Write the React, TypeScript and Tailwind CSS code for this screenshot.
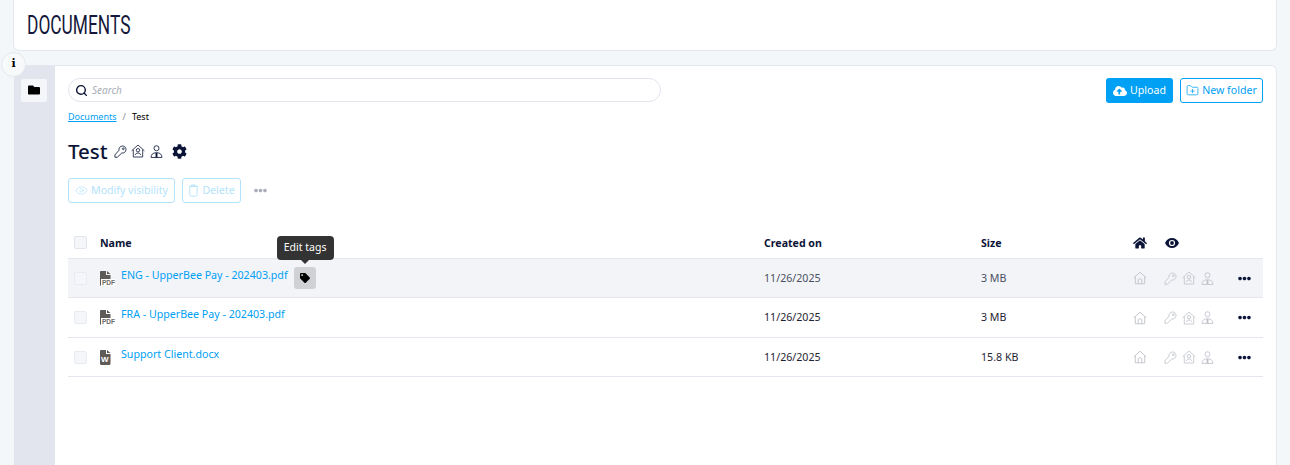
import React from "react";
import { Eye, FolderPlus, Search } from "lucide-react";
import { FaCloudUploadAlt, FaCog, FaEllipsisH, FaFolder, FaHome, FaTag } from "react-icons/fa";

const SANS = "font-['Noto_Sans',sans-serif]";

function KeyOutline({ className = "" }: { className?: string }) {
  return (
    <svg viewBox="0 0 14 14" fill="none" stroke="currentColor" strokeWidth="0.9" className={className}>
      <path d="M5.4 5.6a3.8 3.8 0 1 1 3 3L3.6 13.2H1v-2.5z" strokeLinejoin="round" />
      <circle cx="10" cy="4.1" r="0.9" />
    </svg>
  );
}

function HomeOutline({ className = "" }: { className?: string }) {
  return (
    <svg viewBox="0 0 14 14" fill="none" stroke="currentColor" strokeWidth="0.9" className={className}>
      <path d="M.8 6.8 7 1.2l6.2 5.6" />
      <path d="M2.3 5.6v7.2h9.4V5.6" />
      <path d="M5.2 12.8V8.9c0-.6.4-1 1-1h1.6c.6 0 1 .4 1 1v3.9" />
    </svg>
  );
}

function HomeUser({ className = "" }: { className?: string }) {
  return (
    <svg viewBox="0 0 14 14" fill="none" stroke="currentColor" strokeWidth="0.8" className={className}>
      <path d="M.6 6.8 7 1l6.4 5.800" />
      <path d="M2.300 5.600v7.400h9.400V5.600" />
      <circle cx="7" cy="6.200" r="1.700" />
      <path d="M4.300 11c.3-1.400 1.300-2 2.700-2s2.400.6 2.700 2" />
    </svg>
  );
}

function People({ className = "" }: { className?: string }) {
  return (
    <svg viewBox="0 0 14 14" fill="none" stroke="currentColor" strokeWidth="0.9" className={className}>
      <circle cx="7" cy="3.500" r="2.700" />
      <path d="M1.200 13.400c0-3.200 1.800-5.100 5.800-5.100s5.800 1.900 5.800 5.100z" />
      <path d="M7 8.400v5" strokeWidth="2" />
    </svg>
  );
}

function TrashOutline({ className = "" }: { className?: string }) {
  return (
    <svg viewBox="0 0 12 14" fill="none" stroke="currentColor" strokeWidth="1" className={className}>
      <path d="M1 2.400h10" />
      <path d="M4 2.200V1h4v1.200" />
      <rect x="2" y="2.400" width="8" height="10.800" rx="1.600" />
    </svg>
  );
}

function EyeDisc({ className = "" }: { className?: string }) {
  return (
    <svg viewBox="0 0 14 12" className={className}>
      <path d="M0 6c1.600-3.400 4-5 7-5s5.400 1.600 7 5c-1.600 3.400-4 5-7 5S1.600 9.400 0 6z" fill="#0b1437" />
      <circle cx="7" cy="6" r="3.100" fill="white" />
      <circle cx="7" cy="6" r="1.900" fill="#0b1437" />
    </svg>
  );
}

function FileBadge({ label }: { label: "PDF" | "W" }) {
  const pdf = label === "PDF";
  return (
    <div className="relative h-[15px] w-[14px]">
      <svg viewBox="0 0 11 15" className="h-[15px] w-[11px]" fill="#5f5b59">
        <path d="M0 1.200C0 .5.500 0 1.200 0H6v4h4.500v9.800c0 .7-.5 1.200-1.200 1.200H1.200C.5 15 0 14.500 0 13.800z" />
        <path d="M7 0l3.500 3H7z" />
      </svg>
      {pdf ? (
        <span className="absolute bottom-0 right-[-1px] bg-white pl-[1px] font-['Liberation_Sans',sans-serif] text-[6.5px] font-bold leading-[7px] text-[#6b6866]">
          PDF
        </span>
      ) : (
        <span className="absolute bottom-[1px] left-[1px] font-['Liberation_Sans',sans-serif] text-[8px] font-bold leading-[8px] text-white">
          W
        </span>
      )}
    </div>
  );
}

const ROWS = [
  { name: "ENG - UpperBee Pay - 202403.pdf", type: "PDF" as const, size: "3 MB", hover: true, h: "h-[39px]" },
  { name: "FRA - UpperBee Pay - 202403.pdf", type: "PDF" as const, size: "3 MB", hover: false, h: "h-[40px]" },
  { name: "Support Client.docx", type: "W" as const, size: "15.8 KB", hover: false, h: "h-[39px]" },
];

export default function App() {
  return (
    <div className={`${SANS} h-[465px] w-[1290px] overflow-hidden bg-[#f4f7fa] text-[#0b1437]`}>
      <header className="ml-[13px] mr-[13px] flex h-[51px] items-center rounded-b-[6px] border border-t-0 border-[#e4e8ee] bg-white pl-[13px] pt-[1px]">
        <h1 className="origin-left scale-x-[0.68] font-['Roboto',sans-serif] text-[25.5px] leading-none text-[#14183a]">
          DOCUMENTS
        </h1>
      </header>

      <div className="relative ml-[14px] mr-[13px] mt-[14px] flex h-[410px] rounded-t-[6px] border-r border-t border-[#e4e8ee] bg-white">
        <span className="absolute left-[-13px] top-[-14px] flex h-[25px] w-[25px] items-center justify-center rounded-full border border-[#e4e8ee] bg-[#f7f9fb] font-['DejaVu_Serif',serif] text-[11px] font-bold text-black">
          i
        </span>

        <aside className="w-[41px] shrink-0 bg-[#e2e5ee] pl-[7px] pt-[13px]">
          <div className="flex h-[23px] w-[26px] items-center justify-center rounded-[2px] bg-[#f4f6fa]">
            <FaFolder className="mt-[-1px] h-[12px] w-[12px] text-black" />
          </div>
        </aside>

        <main className="min-w-0 flex-1 pl-[13px] pr-[13px] pt-[12px]">
          <div className="flex items-start justify-between">
            <div className="flex h-[24px] w-[593px] items-center gap-[4px] rounded-full border border-[#e2e5ee] pl-[6px]">
              <Search className="h-[13px] w-[13px] text-[#0b1437]" strokeWidth={2.6} />
              <span className="text-[10px] italic text-[#a8adb8]">Search</span>
            </div>
            <div className="flex gap-[7px]">
              <button className="flex h-[25px] w-[67px] items-center justify-center gap-[3px] rounded-[3px] bg-[#00a0f5] text-[10.6px] text-white">
                <FaCloudUploadAlt className="h-[14px] w-[14px]" />
                Upload
              </button>
              <button className="flex h-[25px] w-[83px] items-center justify-center gap-[3px] rounded-[3px] border border-[#00a0f5] bg-white text-[10.6px] text-[#00a0f5]">
                <FolderPlus className="h-[13px] w-[13px]" strokeWidth={1.4} />
                New folder
              </button>
            </div>
          </div>

          <nav className="mt-[3px] flex h-[20px] items-center gap-[6px] text-[9px] leading-none">
            <a className="text-[#00a0f5] underline">Documents</a>
            <span className="text-[#8a8f9c]">/</span>
            <span className="text-black">Test</span>
          </nav>

          <div className="mt-[8px] flex h-[34px] items-center">
            <h2 className="text-[20.5px] font-medium leading-none text-[#0b1437]">Test</h2>
            <KeyOutline className="ml-[6px] h-[13px] w-[13px] text-[#0b1437]" />
            <HomeUser className="ml-[4px] h-[14px] w-[14px] text-[#0b1437]" />
            <People className="ml-[5px] h-[13px] w-[13px] text-[#0b1437]" />
            <FaCog className="ml-[9px] h-[15px] w-[15px] text-[#0b1437]" />
          </div>

          <div className="mt-[10px] flex items-center">
            <button className="flex h-[25px] w-[107px] items-center justify-center gap-[3px] rounded-[3px] border border-[#b3e3fc] text-[10.6px] text-[#b3e3fc]">
              <Eye className="h-[13px] w-[13px]" strokeWidth={1.3} />
              Modify visibility
            </button>
            <button className="ml-[7px] flex h-[25px] w-[59px] items-center justify-center gap-[3px] rounded-[3px] border border-[#b3e3fc] text-[10.6px] text-[#b3e3fc]">
              <TrashOutline className="h-[13px] w-[11px]" />
              Delete
            </button>
            <FaEllipsisH className="ml-[13px] h-[13px] w-[13px] text-[#a8adb8]" />
          </div>

          <div className="mt-[24px] flex h-[32px] items-center border-b border-[#e4e7ee] text-[10.6px] font-bold text-[#0b1437]">
            <span className="ml-[6px] h-[13px] w-[13px] rounded-[2px] border border-[#e2e5ee] bg-[#f4f6fa]" />
            <span className="ml-[13px] mt-[2px] w-[664px]">Name</span>
            <span className="mt-[2px] w-[217px]">Created on</span>
            <span className="mt-[2px] w-[152px]">Size</span>
            <FaHome className="h-[14px] w-[14px]" />
            <EyeDisc className="ml-[18px] h-[12px] w-[14px]" />
          </div>

          {ROWS.map((row) => (
            <div
              key={row.name}
              className={`relative flex items-center border-b border-[#e4e7ee] text-[10.65px] ${row.h} ${row.hover ? "bg-[#f3f4f8]" : "bg-white"}`}
            >
              <span className="ml-[6px] h-[13px] w-[13px] rounded-[2px] border border-[#e8ebf1] bg-[#f4f6fa]" />
              <div className="ml-[13px] flex w-[664px] items-center">
                <FileBadge label={row.type} />
                <span className="ml-[7px] mt-[-5px] text-[#00a0f5]">{row.name}</span>
                {row.hover && (
                  <span className="relative ml-[6px] flex h-[22px] w-[22px] items-center justify-center rounded-[3px] bg-[#cfd1d4]">
                    <FaTag className="h-[10px] w-[10px] text-black" />
                    <span className="absolute bottom-[29px] left-[-17px] flex h-[24px] w-[57px] items-center justify-center rounded-[4px] bg-[#333] text-[10.5px] text-white after:absolute after:bottom-[-4px] after:left-1/2 after:ml-[-4px] after:border-x-[4px] after:border-t-[4px] after:border-x-transparent after:border-t-[#333]">
                      Edit tags
                    </span>
                  </span>
                )}
              </div>
              <span className={`mt-[1px] w-[217px] ${row.hover ? "text-[#4a5060]" : "text-[#1f2433]"}`}>11/26/2025</span>
              <span className={`mt-[1px] w-[152px] ${row.hover ? "text-[#4a5060]" : "text-[#1f2433]"}`}>{row.size}</span>
              <HomeOutline className="h-[14px] w-[14px] text-[#bfc2ca]" />
              <KeyOutline className="ml-[17px] h-[13px] w-[13px] text-[#bfc2ca]" />
              <HomeUser className="ml-[5px] h-[14px] w-[14px] text-[#bfc2ca]" />
              <People className="ml-[5px] h-[13px] w-[13px] text-[#bfc2ca]" />
              <FaEllipsisH className="ml-[24px] h-[13px] w-[13px] text-[#0b1437]" />
            </div>
          ))}
        </main>
      </div>
    </div>
  );
}
